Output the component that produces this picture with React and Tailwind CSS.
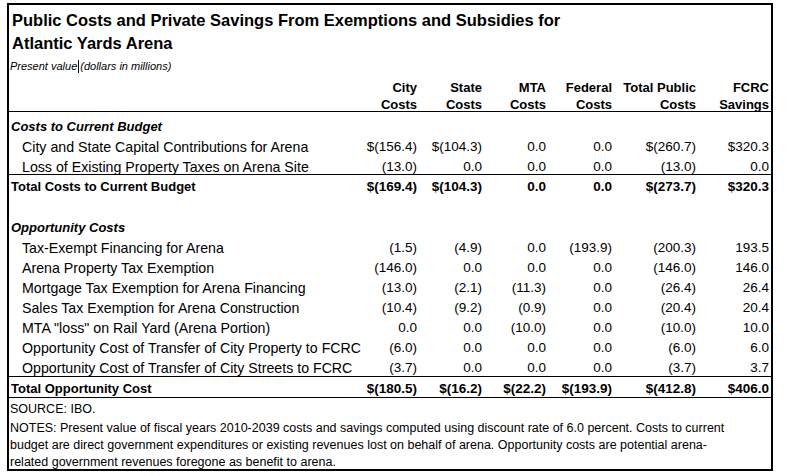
import React from "react";

const cols = "grid grid-cols-[346px_62px_65px_64px_66px_84px_73px] pr-[2px]";

const Row = ({ label, vals, kind = "item", extra = "pt-[4px] h-[20px]" }) => {
  const labelCls =
    kind === "item"
      ? "pl-[13px] text-[14.2px]"
      : kind === "total"
      ? "pl-[2px] font-bold text-[13px]"
      : "pl-[2px] font-bold italic text-[13px]";
  return (
    <div className={`${cols} box-border leading-[16px] ${extra}`}>
      <div className={`${labelCls} whitespace-nowrap`}>{label}</div>
      {(vals || ["", "", "", "", "", ""]).map((v, i) => (
        <div key={i} className={`text-right whitespace-nowrap text-[13.5px] ${kind === "total" ? "font-bold" : ""}`}>
          {v}
        </div>
      ))}
    </div>
  );
};

export default function App() {
  return (
    <div className="bg-white w-[787px] h-[476px] pt-[3px] pl-[7px] text-black" style={{ fontFamily: '"Liberation Sans", Arial, sans-serif' }}>
      <div className="w-[766px] h-[468px] border-2 border-black box-border flex flex-col">
        <div className="pl-[3px] pt-[4px] text-[16.5px] font-bold leading-[23px]">
          <div>Public Costs and Private Savings From Exemptions and Subsidies for</div>
          <div>Atlantic Yards Arena</div>
        </div>
        <div className="pl-[1px] mt-[4px] text-[11px] italic leading-[14px] flex items-center">
          <span>Present value</span>
          <span className="inline-block w-px h-[13px] bg-black mx-[1px]"></span>
          <span>(dollars in millions)</span>
        </div>
        <div className="mt-[4px] h-[3px] bg-black"></div>
        <div className={`${cols} text-[13px] font-bold leading-[17px] pt-[2px] h-[35px] box-border border-b border-black`}>
          <div></div>
          <div className="text-right">City<br />Costs</div>
          <div className="text-right">State<br />Costs</div>
          <div className="text-right">MTA<br />Costs</div>
          <div className="text-right">Federal<br />Costs</div>
          <div className="text-right">Total Public<br />Costs</div>
          <div className="text-right">FCRC<br />Savings</div>
        </div>
        <div>
          <Row kind="section" label="Costs to Current Budget" extra="pt-[7px] h-[23px]" />
          <Row label="City and State Capital Contributions for Arena" vals={["$(156.4)", "$(104.3)", "0.0", "0.0", "$(260.7)", "$320.3"]} />
          <Row label="Loss of Existing Property Taxes on Arena Site" vals={["(13.0)", "0.0", "0.0", "0.0", "(13.0)", "0.0"]} extra="pt-[4px] h-[20px] border-b border-black" />
          <Row kind="total" label="Total Costs to Current Budget" vals={["$(169.4)", "$(104.3)", "0.0", "0.0", "$(273.7)", "$320.3"]} />
          <div className="h-[21px]"></div>
          <Row kind="section" label="Opportunity Costs" />
          <Row label="Tax-Exempt Financing for Arena" vals={["(1.5)", "(4.9)", "0.0", "(193.9)", "(200.3)", "193.5"]} />
          <Row label="Arena Property Tax Exemption" vals={["(146.0)", "0.0", "0.0", "0.0", "(146.0)", "146.0"]} />
          <Row label="Mortgage Tax Exemption for Arena Financing" vals={["(13.0)", "(2.1)", "(11.3)", "0.0", "(26.4)", "26.4"]} />
          <Row label="Sales Tax Exemption for Arena Construction" vals={["(10.4)", "(9.2)", "(0.9)", "0.0", "(20.4)", "20.4"]} />
          <Row label={'MTA "loss" on Rail Yard (Arena Portion)'} vals={["0.0", "0.0", "(10.0)", "0.0", "(10.0)", "10.0"]} />
          <Row label="Opportunity Cost of Transfer of City Property to FCRC" vals={["(6.0)", "0.0", "0.0", "0.0", "(6.0)", "6.0"]} />
          <Row label="Opportunity Cost of Transfer of City Streets to FCRC" vals={["(3.7)", "0.0", "0.0", "0.0", "(3.7)", "3.7"]} extra="pt-[4px] h-[21px] border-b border-black" />
          <Row kind="total" label="Total Opportunity Cost" vals={["$(180.5)", "$(16.2)", "$(22.2)", "$(193.9)", "$(412.8)", "$406.0"]} extra="pt-[4px] h-[21px] border-b border-black" />
        </div>
        <div className="pl-[1px] text-[12.5px] leading-[17px] whitespace-nowrap">
          <div className="pt-[3px] leading-[17px]">SOURCE: IBO.</div>
          <div className="mt-[2px]">
            NOTES: Present value of fiscal years 2010-2039 costs and savings computed using discount rate of 6.0 percent. Costs to current
            <br />
            budget are direct government expenditures or existing revenues lost on behalf of arena. Opportunity costs are potential arena-
            <br />
            related government revenues foregone as benefit to arena.
          </div>
        </div>
      </div>
    </div>
  );
}
